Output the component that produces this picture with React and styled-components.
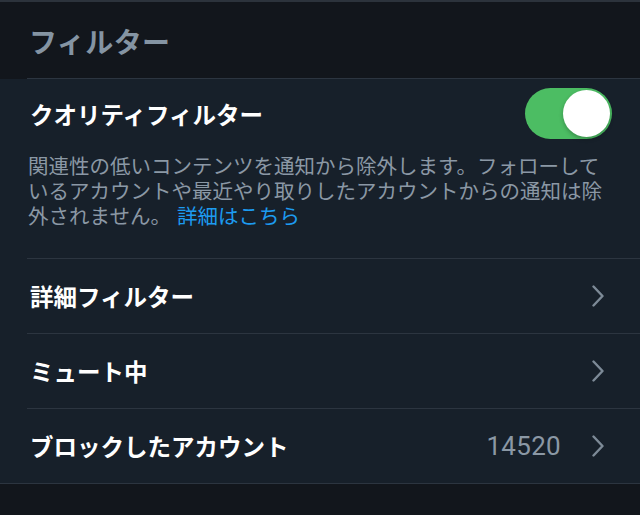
import React from "react";
import styled, { createGlobalStyle } from "styled-components";

const GlobalStyle = createGlobalStyle`
  html, body {
    margin: 0;
    padding: 0;
    background: #12161c;
  }
  body {
    font-family: "Noto Sans CJK JP", "Noto Sans", sans-serif;
    -webkit-font-smoothing: antialiased;
  }
`;

const Page = styled.div`
  width: 640px;
  height: 515px;
  overflow: hidden;
  background: #12161c;
  border-top: 2px solid #2c333c;
  box-sizing: border-box;
`;

const Header = styled.header`
  height: 77px;
  display: flex;
  align-items: center;
  padding-left: 29px;
  position: relative;

  &::after {
    content: "";
    position: absolute;
    left: 27px;
    right: 0;
    bottom: 0;
    height: 1px;
    background: #2c3540;
  }
`;

const HeaderTitle = styled.h1`
  margin: 0;
  font-size: 28px;
  font-weight: 700;
  color: #8494a3;
  letter-spacing: 0.4px;
`;

const Section = styled.section`
  background: #17202a;
  border-bottom: 1px solid #2c3540;
`;

const QualityBlock = styled.div`
  padding: 9px 28px 30px 28px;
`;

const QualityTop = styled.div`
  display: flex;
  align-items: center;
  justify-content: space-between;
  height: 51px;
  padding-left: 2px;
`;

const RowLabel = styled.span`
  font-size: 23.5px;
  font-weight: 700;
  color: #ffffff;
`;

const Toggle = styled.div`
  width: 87px;
  height: 51px;
  border-radius: 26px;
  background: ${(p) => (p.$on ? "#4cbd63" : "#3a444f")};
  display: flex;
  align-items: center;
  justify-content: ${(p) => (p.$on ? "flex-end" : "flex-start")};
  padding: 2px;
  box-sizing: border-box;
`;

const Knob = styled.div`
  width: 47px;
  height: 47px;
  border-radius: 50%;
  background: #ffffff;
  box-shadow: 0 2px 4px rgba(0, 0, 0, 0.25);
`;

const Description = styled.p`
  margin: 14px 0 0 0;
  font-size: 20.5px;
  line-height: 25px;
  color: #8b98a5;
`;

const Link = styled.a`
  margin-left: 6px;
  color: #1d9bf0;
  text-decoration: none;
`;

const Row = styled.div`
  height: 75px;
  display: flex;
  align-items: center;
  padding: 0 36px 0 30px;
  position: relative;

  &::before {
    content: "";
    position: absolute;
    left: 27px;
    right: 0;
    top: 0;
    height: 1px;
    background: #2c3540;
  }
`;

const RowRight = styled.div`
  margin-left: auto;
  display: flex;
  align-items: center;
  gap: 31px;
`;

const Count = styled.span`
  font-family: Roboto, "Noto Sans", sans-serif;
  font-size: 26px;
  letter-spacing: 0.3px;
  color: #8b98a5;
`;

const Chevron = () => (
  <svg width="12" height="22" viewBox="0 0 12 22" fill="none">
    <path
      d="M1.5 1.5 L10.5 11 L1.5 20.5"
      stroke="#7d8a97"
      strokeWidth="2.4"
      strokeLinecap="round"
      strokeLinejoin="round"
    />
  </svg>
);

const rows = [
  { label: "詳細フィルター" },
  { label: "ミュート中" },
  { label: "ブロックしたアカウント", count: "14520" },
];

export default function App() {
  return (
    <Page>
      <GlobalStyle />
      <Header>
        <HeaderTitle>フィルター</HeaderTitle>
      </Header>
      <Section>
        <QualityBlock>
          <QualityTop>
            <RowLabel>クオリティフィルター</RowLabel>
            <Toggle $on>
              <Knob />
            </Toggle>
          </QualityTop>
          <Description>
            関連性の低いコンテンツを通知から除外します。フォローしているアカウントや最近やり取りしたアカウントからの通知は除外されません。
            <Link href="#">詳細はこちら</Link>
          </Description>
        </QualityBlock>
        {rows.map((row) => (
          <Row key={row.label}>
            <RowLabel>{row.label}</RowLabel>
            <RowRight>
              {row.count && <Count>{row.count}</Count>}
              <Chevron />
            </RowRight>
          </Row>
        ))}
      </Section>
    </Page>
  );
}
